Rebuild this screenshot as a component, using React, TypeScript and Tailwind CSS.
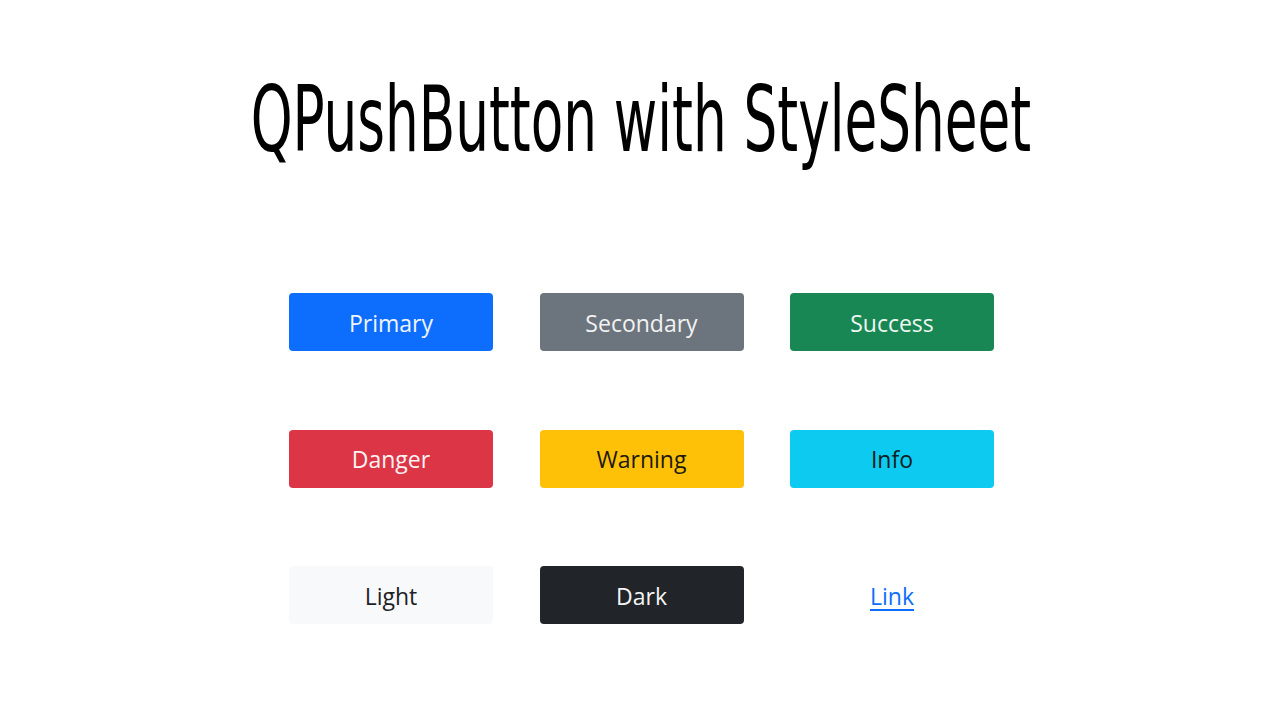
const buttons = [
  { label: "Primary", cls: "bg-[#0d6efd] text-[#f0f4ff]" },
  { label: "Secondary", cls: "bg-[#6c757d] text-[#f2f2f2]" },
  { label: "Success", cls: "bg-[#198754] text-[#eef7f1]" },
  { label: "Danger", cls: "bg-[#dc3545] text-[#fff3f4]" },
  { label: "Warning", cls: "bg-[#ffc107] text-[#1c1a10]" },
  { label: "Info", cls: "bg-[#0dcaf0] text-[#101c20]" },
  { label: "Light", cls: "bg-[#f8f9fa] text-[#1e2125]" },
  { label: "Dark", cls: "bg-[#212529] text-[#f4f4f4]" },
  { label: "Link", cls: "bg-transparent text-[#0d6efd] underline underline-offset-4" },
];

export default function App() {
  return (
    <main className="w-[1280px] h-[720px] bg-white overflow-hidden flex flex-col items-center">
      <h1 className="mt-[70px] h-[100px] flex items-center justify-center ml-[1px]">
        <span
          className="inline-block text-[90px] leading-none text-black origin-center scale-x-[0.657] whitespace-nowrap"
          style={{ fontFamily: '"DejaVu Sans Condensed", "DejaVu Sans", sans-serif' }}
        >
          QPushButton with StyleSheet
        </span>
      </h1>
      <div className="mt-[123px] grid grid-cols-[204px_204px_204px] gap-x-[46.5px] gap-y-[78.5px] ml-[3px]">
        {buttons.map((b) => (
          <button
            key={b.label}
            className={`${b.cls} h-[58px] rounded-[4px] pt-[2px] text-[23px] flex items-center justify-center`}
            style={{ fontFamily: '"Open Sans", "Noto Sans", sans-serif' }}
          >
            {b.label}
          </button>
        ))}
      </div>
    </main>
  );
}
